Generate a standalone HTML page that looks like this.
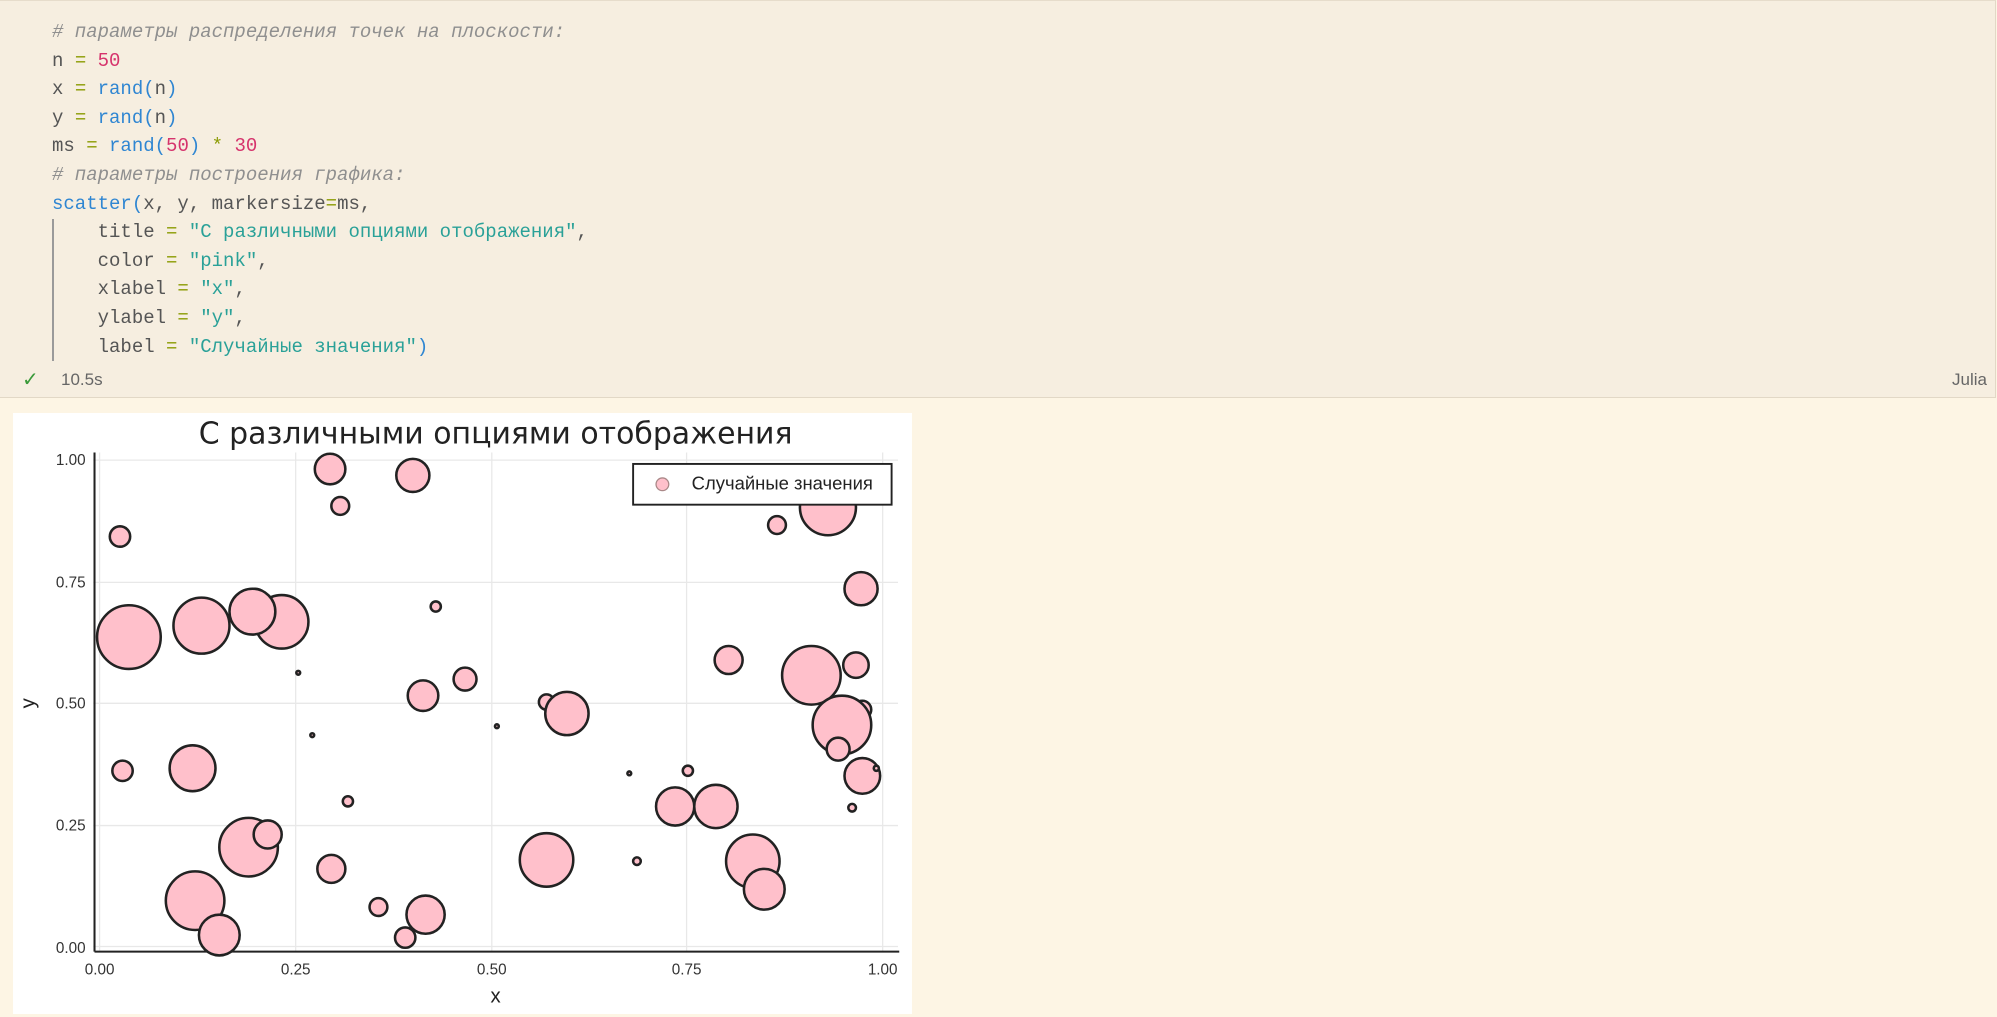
<!DOCTYPE html>
<html><head><meta charset="utf-8"><style>
html,body{margin:0;padding:0;width:1997px;height:1017px;overflow:hidden;background:#fdf5e4;}
.cell{position:absolute;left:0;top:0;width:1995px;height:396px;background:#f6eee0;border-bottom:1px solid #e2d8c6;border-right:1px solid #e2d8c6;border-top:1px solid #e6dccb;}
.code{position:absolute;left:52px;top:17px;font-family:"Liberation Mono","DejaVu Sans Mono",monospace;font-size:19px;line-height:28.6px;color:#555;white-space:pre;}
.c{color:#8f8f8f;font-style:italic}
.n{color:#d6336c}
.f{color:#2f86d2}
.o{color:#8a9a00}
.s{color:#2aa198}
.bar{position:absolute;left:52px;top:218px;width:2px;height:142px;background:#9a9a9a;}
.st{position:absolute;top:369px;font-family:"Liberation Sans",sans-serif;font-size:17px;color:#666;}
</style></head><body>
<div class="cell">
<div class="code"><span class="c"># параметры распределения точек на плоскости:</span>
n <span class="o">=</span> <span class="n">50</span>
x <span class="o">=</span> <span class="f">rand(</span>n<span class="f">)</span>
y <span class="o">=</span> <span class="f">rand(</span>n<span class="f">)</span>
ms <span class="o">=</span> <span class="f">rand(</span><span class="n">50</span><span class="f">)</span> <span class="o">*</span> <span class="n">30</span>
<span class="c"># параметры построения графика:</span>
<span class="f">scatter(</span>x, y, markersize<span class="o">=</span>ms,
    title <span class="o">=</span> <span class="s">"С различными опциями отображения"</span>,
    color <span class="o">=</span> <span class="s">"pink"</span>,
    xlabel <span class="o">=</span> <span class="s">"x"</span>,
    ylabel <span class="o">=</span> <span class="s">"y"</span>,
    label <span class="o">=</span> <span class="s">"Случайные значения"</span><span class="f">)</span></div>
<div class="bar"></div>
<div class="st" style="left:22px;color:#3a9a3a;font-size:20px;top:366px">✓</div>
<div class="st" style="left:61px">10.5s</div>
<div class="st" style="left:1952px">Julia</div>
</div>
<svg style="position:absolute;left:13px;top:413px" width="899" height="601" viewBox="10 324 706 472" xmlns="http://www.w3.org/2000/svg">
<rect x="10" y="324" width="706" height="472" fill="#fff"/>
<g stroke="#e8e8e8" stroke-width="1">
<line x1="78" y1="355" x2="78" y2="747"/><line x1="232" y1="355" x2="232" y2="747"/><line x1="386" y1="355" x2="386" y2="747"/><line x1="539" y1="355" x2="539" y2="747"/><line x1="693" y1="355" x2="693" y2="747"/>
<line x1="73" y1="361" x2="705" y2="361"/><line x1="73" y1="457" x2="705" y2="457"/><line x1="73" y1="552" x2="705" y2="552"/><line x1="73" y1="648" x2="705" y2="648"/><line x1="73" y1="743" x2="705" y2="743"/>
</g>
<g stroke="#222" stroke-width="1.6">
<line x1="74" y1="355" x2="74" y2="747"/><line x1="74" y1="747" x2="706" y2="747"/>
</g>
<g fill="#ffc0cb" stroke="#222" stroke-width="2">
<circle cx="94" cy="421" r="8"/><circle cx="259" cy="368" r="12"/><circle cx="324" cy="373" r="13"/><circle cx="267" cy="397" r="7"/><circle cx="610" cy="412" r="7"/><circle cx="650" cy="398" r="22"/><circle cx="676" cy="462" r="13"/><circle cx="101" cy="500" r="25"/><circle cx="158" cy="491" r="22"/><circle cx="200" cy="472" r="10"/><circle cx="221" cy="488" r="21"/><circle cx="198" cy="480" r="18"/><circle cx="342" cy="476" r="4"/><circle cx="234" cy="528" r="1.5"/><circle cx="572" cy="518" r="11"/><circle cx="677" cy="557" r="7"/><circle cx="637" cy="530" r="23"/><circle cx="672" cy="522" r="10"/><circle cx="332" cy="546" r="12"/><circle cx="365" cy="533" r="9"/><circle cx="429" cy="551" r="6"/><circle cx="445" cy="560" r="17"/><circle cx="661" cy="569" r="23"/><circle cx="658" cy="588" r="9"/><circle cx="245" cy="577" r="1.5"/><circle cx="390" cy="570" r="1.5"/><circle cx="96" cy="605" r="8"/><circle cx="151" cy="603" r="18"/><circle cx="494" cy="607" r="1.5"/><circle cx="540" cy="605" r="4"/><circle cx="677" cy="609" r="14"/><circle cx="688" cy="603" r="2"/><circle cx="273" cy="629" r="4"/><circle cx="530" cy="633" r="15"/><circle cx="562" cy="633" r="17"/><circle cx="669" cy="634" r="3"/><circle cx="195" cy="665" r="23"/><circle cx="210" cy="655" r="11"/><circle cx="260" cy="682" r="11"/><circle cx="429" cy="675" r="21"/><circle cx="500" cy="676" r="3"/><circle cx="591" cy="676" r="21"/><circle cx="600" cy="698" r="16"/><circle cx="153" cy="707" r="23"/><circle cx="172" cy="734" r="16"/><circle cx="297" cy="712" r="7"/><circle cx="334" cy="718" r="15"/><circle cx="318" cy="736" r="8"/>
</g>
<rect x="497" y="364" width="203" height="32" fill="#fff" stroke="#222" stroke-width="1.5"/>
<circle cx="520" cy="380" r="5" fill="#ffc0cb" stroke="#a88" stroke-width="1"/>
<g font-family="Liberation Sans, sans-serif" fill="#222">
<text x="543" y="384" font-size="14.5">Случайные значения</text>
<text x="389" y="348" font-size="23.5" font-family="DejaVu Sans, sans-serif" text-anchor="middle">С различными опциями отображения</text>
<text x="389" y="787" font-size="16" text-anchor="middle">x</text>
<text x="27" y="552" font-size="16" text-anchor="middle" transform="rotate(-90 27 552)">y</text>
<g font-size="12" fill="#333" text-anchor="end"><text x="67" y="365">1.00</text><text x="67" y="461">0.75</text><text x="67" y="556">0.50</text><text x="67" y="652">0.25</text><text x="67" y="748">0.00</text></g>
<g font-size="12" fill="#333" text-anchor="middle"><text x="78" y="765">0.00</text><text x="232" y="765">0.25</text><text x="386" y="765">0.50</text><text x="539" y="765">0.75</text><text x="693" y="765">1.00</text></g>
</g>
</svg>
</body></html>
